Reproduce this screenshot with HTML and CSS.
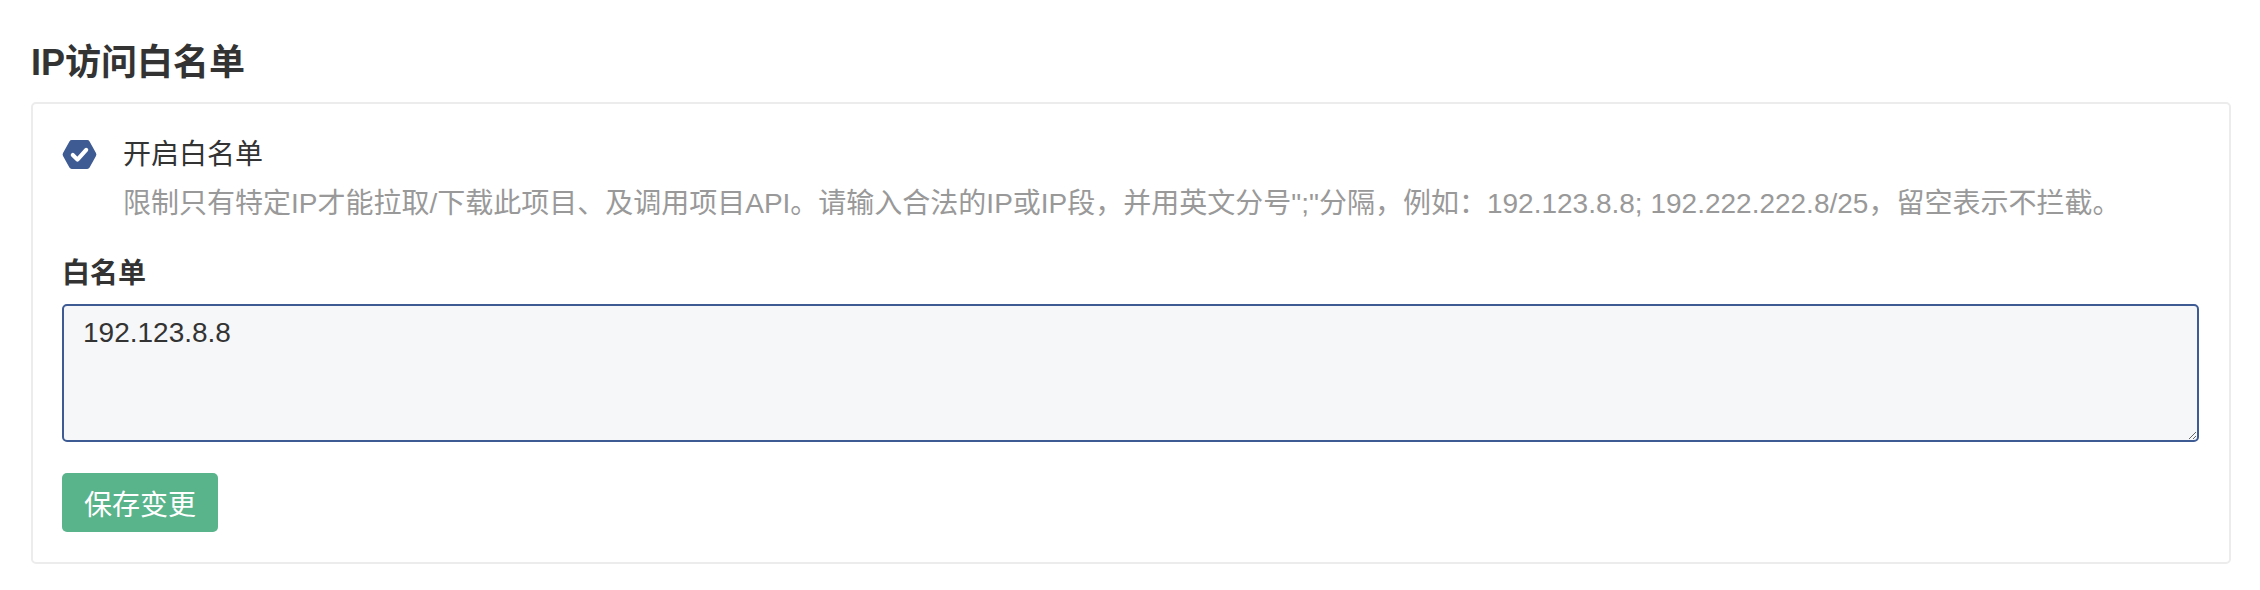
FILE: index.html
```html
<!DOCTYPE html>
<html lang="zh-CN">
<head>
<meta charset="utf-8">
<title>IP访问白名单</title>
<link rel="stylesheet" href="styles.css">
</head>
<body>
<div class="page">
  <h2 class="title">IP访问白名单</h2>
  <div class="card">
    <div class="check-row">
      <span class="check-icon">
        <svg width="35" height="31" viewBox="0 0 34 30">
          <path d="M9.5 1 L24.5 1 Q26 1 26.8 2.3 L33 13.6 Q33.8 15 33 16.4 L26.8 27.7 Q26 29 24.5 29 L9.5 29 Q8 29 7.2 27.7 L1 16.4 Q0.2 15 1 13.6 L7.2 2.3 Q8 1 9.5 1 Z" fill="#3e5b94"/>
          <path d="M10.5 15.5 L15 20 L23.5 10.5" fill="none" stroke="#fff" stroke-width="4" stroke-linecap="round" stroke-linejoin="round"/>
        </svg>
      </span>
      <div class="check-text">
        <div class="check-label">开启白名单</div>
        <div class="check-help">限制只有特定IP才能拉取/下载此项目、及调用项目API。请输入合法的IP或IP段，并用英文分号";"分隔，例如：192.123.8.8; 192.222.222.8/25，留空表示不拦截。</div>
      </div>
    </div>
    <label class="field-label" for="wl">白名单</label>
    <textarea id="wl" class="field">192.123.8.8</textarea>
    <button class="btn-save" type="button">保存变更</button>
  </div>
</div>
</body>
</html>
```
FILE: styles.css
```css
html, body {
  margin: 0;
  padding: 0;
  background: #fff;
}
body {
  font-family: "Liberation Sans", "Noto Sans CJK SC", sans-serif;
  color: #333;
}
.page {
  padding: 38px 29px 0 31px;
}
.title {
  margin: 0 0 14px 0;
  font-size: 36px;
  line-height: 50px;
  font-weight: 700;
  color: #333;
}
.card {
  border: 2px solid #ececec;
  border-radius: 5px;
  padding: 26px 30px 30px 29px;
  display: flex;
  flex-direction: column;
  align-items: flex-start;
}
.check-row {
  display: flex;
  align-items: flex-start;
  gap: 26px;
  width: 100%;
}
.check-icon {
  display: flex;
  height: 49px;
  align-items: center;
}
.check-icon svg {
  display: block;
}
.check-text {
  font-size: 28px;
  line-height: 49px;
}
.check-label {
  color: #333;
}
.check-help {
  color: #999;
}
.field-label {
  margin-top: 26px;
  font-size: 28px;
  line-height: 40px;
  font-weight: 700;
  color: #333;
}
.field {
  margin-top: 10px;
  box-sizing: border-box;
  width: 100%;
  height: 138px;
  border: 2px solid #3e5b94;
  border-radius: 5px;
  background: #f6f7f9;
  padding: 6px 19px;
  font-family: "Liberation Sans", "Noto Sans CJK SC", sans-serif;
  font-size: 28px;
  line-height: 42px;
  color: #333;
  outline: none;
}
.btn-save {
  margin-top: 31px;
  width: 156px;
  height: 59px;
  border: none;
  border-radius: 5px;
  background: #59b38b;
  color: #fff;
  font-family: "Liberation Sans", "Noto Sans CJK SC", sans-serif;
  font-size: 28px;
  padding: 0;
  cursor: pointer;
}
```
